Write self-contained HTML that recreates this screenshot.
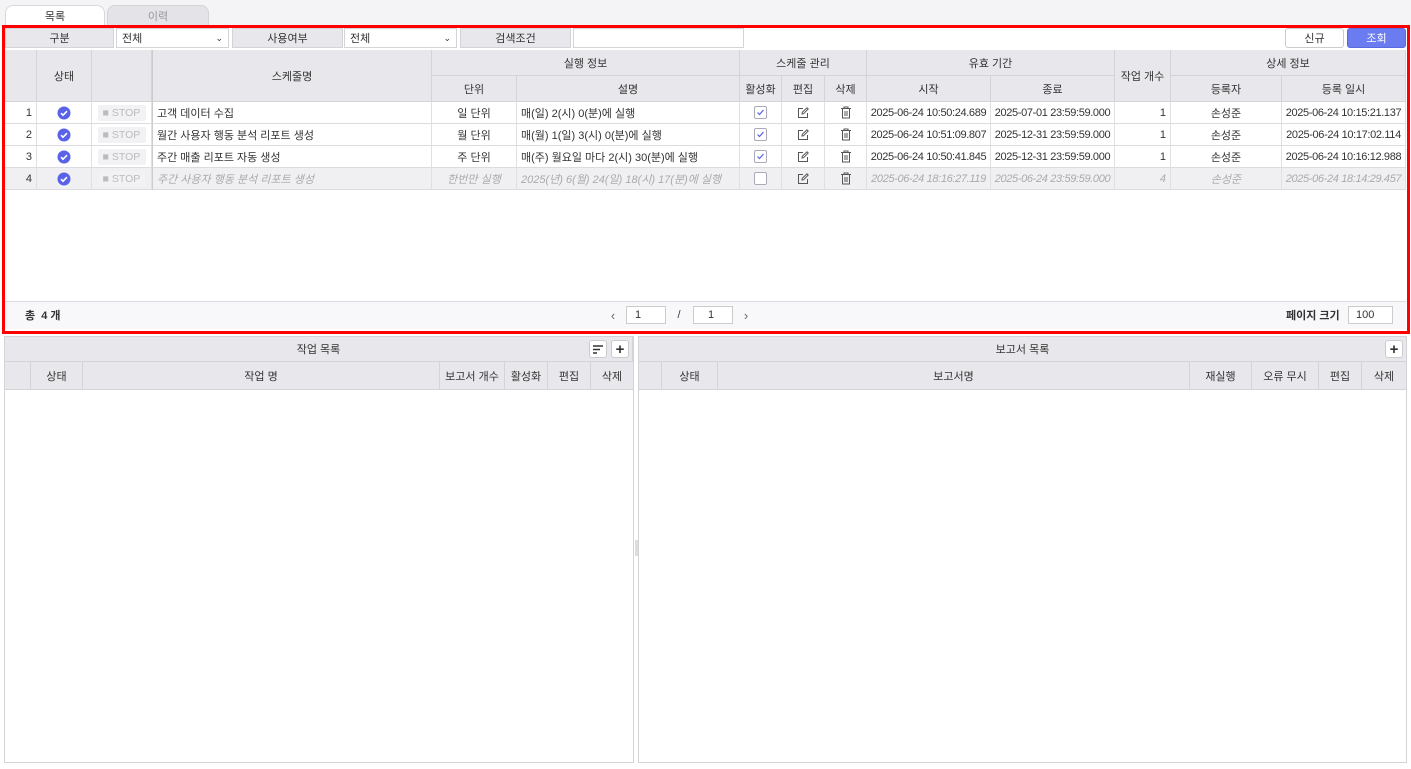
<!DOCTYPE html>
<html><head><meta charset="utf-8"><style>
*{box-sizing:border-box;margin:0;padding:0}
body{width:1411px;height:769px;background:#fff;position:relative;overflow:hidden;font-family:"Liberation Sans","Noto Sans CJK KR",sans-serif;font-size:11px;color:#333}
.a{position:absolute}
.c{position:absolute;display:flex;align-items:center;justify-content:center;white-space:nowrap;overflow:hidden}
.h{background:#e8e8ec;border-right:1px solid #d4d4d8;border-bottom:1px solid #d4d4d8;color:#333}
.d{border-right:1px solid #e0e0e4;border-bottom:1px solid #dcdce0;background:#fff}
.g{background:#f0f0f3;color:#aaa;font-style:italic}
.l{justify-content:flex-start;padding-left:4px}
.r{justify-content:flex-end;padding-right:4px}
.dt{letter-spacing:-0.35px}
.np{font-style:normal;color:#333}
.chk{width:13px;height:13px;border:1px solid #aab;border-radius:2px;background:#fff;display:flex;align-items:center;justify-content:center}
.stop{width:48px;height:16px;background:#f2f2f4;border-radius:2px;color:#bbb;font-size:10.5px;display:flex;align-items:center;justify-content:center;font-style:normal}
</style></head><body>
<div class="a" style="left:0;top:0;width:1411px;height:26px;background:#f4f4f6"></div>
<div class="c" style="left:5px;top:5px;width:100px;height:21px;background:#fff;border:1px solid #d8d8dc;border-bottom:none;border-radius:8px 8px 0 0;color:#333">목록</div>
<div class="c" style="left:107px;top:5px;width:102px;height:20px;background:#e4e4e8;border:1px solid #d4d4d8;border-bottom:none;border-radius:8px 8px 0 0;color:#999">이력</div>
<div class="a" style="left:2px;top:25px;width:1408px;height:309px;border:3px solid #f00;z-index:5"></div>
<div class="c h" style="left:5px;top:28px;width:109px;height:20px;border:1px solid #d4d4d8">구분</div>
<div class="c" style="left:116px;top:28px;width:113px;height:20px;border:1px solid #d4d4d8;justify-content:space-between;padding:0 5px">전체<span style="font-size:9px">⌄</span></div>
<div class="c h" style="left:232px;top:28px;width:111px;height:20px;border:1px solid #d4d4d8">사용여부</div>
<div class="c" style="left:344px;top:28px;width:113px;height:20px;border:1px solid #d4d4d8;justify-content:space-between;padding:0 5px">전체<span style="font-size:9px">⌄</span></div>
<div class="c h" style="left:460px;top:28px;width:111px;height:20px;border:1px solid #d4d4d8">검색조건</div>
<div class="a" style="left:573px;top:28px;width:171px;height:20px;border:1px solid #d4d4d8"></div>
<div class="c" style="left:1285px;top:28px;width:59px;height:20px;border:1px solid #ccc;border-radius:3px;background:#fff">신규</div>
<div class="c" style="left:1347px;top:28px;width:59px;height:20px;border-radius:3px;background:#6b7cf0;color:#fff;border:1px solid #5a6ae0">조회</div>
<div class="a" style="left:5px;top:50px;width:1401px;height:52px;background:#e8e8ec;border-top:1px solid #d4d4d8"></div>
<div class="c h" style="left:5px;top:50px;width:32px;height:52px"></div>
<div class="c h" style="left:37px;top:50px;width:55px;height:52px">상태</div>
<div class="c h" style="left:92px;top:50px;width:60px;height:52px"></div>
<div class="c h" style="left:152px;top:50px;width:280px;height:52px;border-left:1px solid #ccc">스케줄명</div>
<div class="c h" style="left:432px;top:50px;width:308px;height:26px">실행 정보</div>
<div class="c h" style="left:432px;top:76px;width:85px;height:26px">단위</div>
<div class="c h" style="left:517px;top:76px;width:223px;height:26px">설명</div>
<div class="c h" style="left:740px;top:50px;width:127px;height:26px">스케줄 관리</div>
<div class="c h" style="left:740px;top:76px;width:42px;height:26px">활성화</div>
<div class="c h" style="left:782px;top:76px;width:43px;height:26px">편집</div>
<div class="c h" style="left:825px;top:76px;width:42px;height:26px">삭제</div>
<div class="c h" style="left:867px;top:50px;width:248px;height:26px">유효 기간</div>
<div class="c h" style="left:867px;top:76px;width:124px;height:26px">시작</div>
<div class="c h" style="left:991px;top:76px;width:124px;height:26px">종료</div>
<div class="c h" style="left:1115px;top:50px;width:56px;height:52px">작업 개수</div>
<div class="c h" style="left:1171px;top:50px;width:235px;height:26px">상세 정보</div>
<div class="c h" style="left:1171px;top:76px;width:111px;height:26px">등록자</div>
<div class="c h" style="left:1282px;top:76px;width:124px;height:26px">등록 일시</div>
<div id="rows"></div>
<script>
var rows=[
["1","고객 데이터 수집","일 단위","매(일) 2(시) 0(분)에 실행",1,"2025-06-24 10:50:24.689","2025-07-01 23:59:59.000","1","2025-06-24 10:15:21.137"],
["2","월간 사용자 행동 분석 리포트 생성","월 단위","매(월) 1(일) 3(시) 0(분)에 실행",1,"2025-06-24 10:51:09.807","2025-12-31 23:59:59.000","1","2025-06-24 10:17:02.114"],
["3","주간 매출 리포트 자동 생성","주 단위","매(주) 월요일 마다 2(시) 30(분)에 실행",1,"2025-06-24 10:50:41.845","2025-12-31 23:59:59.000","1","2025-06-24 10:16:12.988"],
["4","주간 사용자 행동 분석 리포트 생성","한번만 실행","2025(년) 6(월) 24(일) 18(시) 17(분)에 실행",0,"2025-06-24 18:16:27.119","2025-06-24 23:59:59.000","4","2025-06-24 18:14:29.457"]];
var h='';
var edit='<svg width="12" height="12" viewBox="0 0 12 12" fill="none" stroke="#555" stroke-width="1"><path d="M6 1.5H1.5v9h9V6"/><path d="M5 7l.3-1.8L10 .8l1.2 1.2-4.6 4.7z"/></svg>';
var del='<svg width="12" height="13" viewBox="0 0 12 13" fill="none" stroke="#555" stroke-width="1"><path d="M1 2.5h10M4 2.5V1h4v1.5M2.5 2.5v9.5h7V2.5M5 5v5M7 5v5"/></svg>';
var ok='<svg width="14" height="14" viewBox="0 0 14 14"><circle cx="7" cy="7" r="6.5" fill="#5a63e8"/><path d="M4 7.2l2 2 4-4" stroke="#fff" stroke-width="1.6" fill="none"/></svg>';
var tick='<svg width="9" height="9" viewBox="0 0 9 9"><path d="M1.5 4.5l2 2 4-4.5" stroke="#5a63e8" stroke-width="1.2" fill="none"/></svg>';
rows.forEach(function(r,i){var y=102+i*22,g=i==3?' g':'';
function c(x,w,t,cls){h+='<div class="c d'+g+' '+(cls||'')+'" style="left:'+x+'px;top:'+y+'px;width:'+w+'px;height:22px">'+t+'</div>';}
c(5,32,r[0],'r np');c(37,55,ok);c(92,60,'<div class="stop">■ STOP</div>');
h+='<div class="c d'+g+' l" style="left:152px;top:'+y+'px;width:280px;height:22px;border-left:1px solid #ccc">'+r[1]+'</div>';
c(432,85,r[2]);c(517,223,r[3],'l');c(740,42,'<div class="chk">'+(r[4]?tick:'')+'</div>');c(782,43,edit);c(825,42,del);
c(867,124,r[5],'dt');c(991,124,r[6],'dt');c(1115,56,r[7],'r');c(1171,111,'손성준');c(1282,124,r[8],'dt');});
document.getElementById('rows').innerHTML=h;
</script>
<div class="a" style="left:5px;top:301px;width:1401px;height:28px;background:#f8f8fa;border-top:1px solid #dcdce0"></div>
<div class="c" style="left:25px;top:305px;height:20px;font-weight:bold;color:#333">총 &nbsp;4 개</div>
<div class="c" style="left:606px;top:305px;width:14px;height:20px;color:#666;font-size:13px">‹</div>
<div class="c" style="left:626px;top:306px;width:40px;height:18px;border:1px solid #ccc;background:#fff;justify-content:flex-start;padding-left:8px">1</div>
<div class="c" style="left:673px;top:305px;width:12px;height:20px">/</div>
<div class="c" style="left:693px;top:306px;width:40px;height:18px;border:1px solid #ccc;background:#fff;justify-content:flex-start;padding-left:14px">1</div>
<div class="c" style="left:739px;top:305px;width:14px;height:20px;color:#666;font-size:13px">›</div>
<div class="c" style="left:1286px;top:305px;height:20px;font-weight:bold">페이지 크기</div>
<div class="c" style="left:1348px;top:306px;width:45px;height:18px;border:1px solid #ccc;background:#fff;justify-content:flex-start;padding-left:7px">100</div>
<div class="a" style="left:4px;top:336px;width:630px;height:427px;border:1px solid #d4d4d8"></div>
<div class="c h" style="left:5px;top:337px;width:628px;height:25px">작업 목록</div>
<div class="c" style="left:589px;top:340px;width:18px;height:18px;border:1px solid #ccc;border-radius:3px;background:#fff"><svg width="10" height="9" viewBox="0 0 10 9"><path d="M0 1h10M0 4.5h7M0 8h4" stroke="#333" stroke-width="1.4"/></svg></div>
<div class="c" style="left:611px;top:340px;width:18px;height:18px;border:1px solid #ccc;border-radius:3px;background:#fff;font-size:15px;font-weight:bold">+</div>
<div class="c h" style="left:5px;top:362px;width:26px;height:28px"></div>
<div class="c h" style="left:31px;top:362px;width:52px;height:28px">상태</div>
<div class="c h" style="left:83px;top:362px;width:357px;height:28px">작업 명</div>
<div class="c h" style="left:440px;top:362px;width:65px;height:28px">보고서 개수</div>
<div class="c h" style="left:505px;top:362px;width:43px;height:28px">활성화</div>
<div class="c h" style="left:548px;top:362px;width:43px;height:28px">편집</div>
<div class="c h" style="left:591px;top:362px;width:42px;height:28px;border-right:none">삭제</div>
<div class="a" style="left:638px;top:336px;width:769px;height:427px;border:1px solid #d4d4d8"></div>
<div class="a" style="left:635px;top:540px;width:3px;height:16px;background:#ddd"></div>
<div class="c h" style="left:639px;top:337px;width:767px;height:25px;border-right:none">보고서 목록</div>
<div class="c" style="left:1385px;top:340px;width:18px;height:18px;border:1px solid #ccc;border-radius:3px;background:#fff;font-size:15px;font-weight:bold">+</div>
<div class="c h" style="left:639px;top:362px;width:23px;height:28px"></div>
<div class="c h" style="left:662px;top:362px;width:56px;height:28px">상태</div>
<div class="c h" style="left:718px;top:362px;width:472px;height:28px">보고서명</div>
<div class="c h" style="left:1190px;top:362px;width:62px;height:28px">재실행</div>
<div class="c h" style="left:1252px;top:362px;width:67px;height:28px">오류 무시</div>
<div class="c h" style="left:1319px;top:362px;width:43px;height:28px">편집</div>
<div class="c h" style="left:1362px;top:362px;width:44px;height:28px;border-right:none">삭제</div>
</body></html>
